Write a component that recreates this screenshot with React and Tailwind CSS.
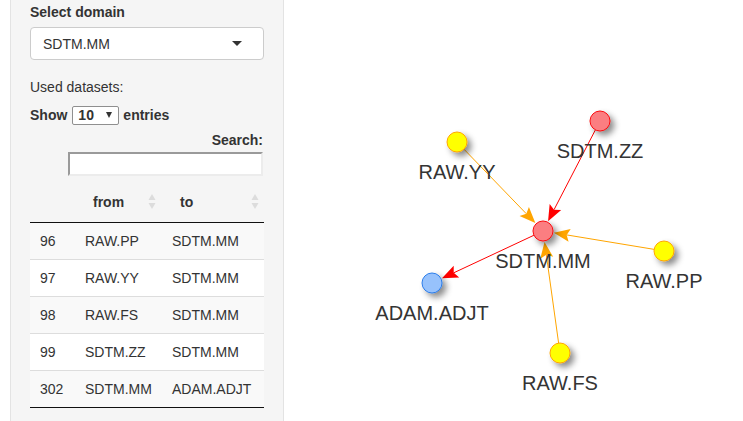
import React from 'react'

const rows = [
  { id: 96, from: 'RAW.PP', to: 'SDTM.MM' },
  { id: 97, from: 'RAW.YY', to: 'SDTM.MM' },
  { id: 98, from: 'RAW.FS', to: 'SDTM.MM' },
  { id: 99, from: 'SDTM.ZZ', to: 'SDTM.MM' },
  { id: 302, from: 'SDTM.MM', to: 'ADAM.ADJT' },
]

const palette = {
  red: { fill: '#FB7E81', stroke: '#FA0A10' },
  yellow: { fill: '#FFFF00', stroke: '#FFA500' },
  blue: { fill: '#97C2FC', stroke: '#2B7CE9' },
}

const nodes = {
  'RAW.YY': { x: 457, y: 142, c: 'yellow' },
  'SDTM.ZZ': { x: 600, y: 121, c: 'red' },
  'SDTM.MM': { x: 543, y: 231, c: 'red' },
  'RAW.PP': { x: 664, y: 251, c: 'yellow' },
  'ADAM.ADJT': { x: 432, y: 283, c: 'blue' },
  'RAW.FS': { x: 560, y: 353, c: 'yellow' },
}

const edges = [
  { from: 'RAW.YY', to: 'SDTM.MM', color: '#FFA500' },
  { from: 'SDTM.ZZ', to: 'SDTM.MM', color: '#FF0000' },
  { from: 'RAW.PP', to: 'SDTM.MM', color: '#FFA500' },
  { from: 'RAW.FS', to: 'SDTM.MM', color: '#FFA500' },
  { from: 'SDTM.MM', to: 'ADAM.ADJT', color: '#FF0000' },
]

const R = 10

function Edge({ e }) {
  const s = nodes[e.from]
  const t = nodes[e.to]
  const dx = t.x - s.x
  const dy = t.y - s.y
  const len = Math.hypot(dx, dy)
  const ux = dx / len
  const uy = dy / len
  const tipX = t.x - ux * (R + 1)
  const tipY = t.y - uy * (R + 1)
  const L = 16
  const W = 6.5
  const bx = tipX - ux * L
  const by = tipY - uy * L
  const pts = [
    [tipX, tipY],
    [bx - uy * W, by + ux * W],
    [bx + ux * 3, by + uy * 3],
    [bx + uy * W, by - ux * W],
  ]
  return (
    <g>
      <line x1={s.x + ux * R} y1={s.y + uy * R} x2={bx + ux * 3} y2={by + uy * 3} stroke={e.color} strokeWidth="1" />
      <polygon points={pts.map(p => p.join(',')).join(' ')} fill={e.color} />
    </g>
  )
}

function SortIcon() {
  return (
    <svg width="8" height="16" viewBox="0 0 8 16" className="shrink-0">
      <path d="M4 0 L7.5 6 L0.5 6 Z" fill="#dcdcdc" />
      <path d="M4 15 L7.5 9 L0.5 9 Z" fill="#dcdcdc" />
    </svg>
  )
}

export default function App() {
  return (
    <div
      className="flex w-[743px] h-[421px] overflow-hidden bg-white text-[14px] text-[#333333]"
      style={{ fontFamily: "'Liberation Sans', Arial, sans-serif" }}
    >
      {/* sidebar well */}
      <div className="ml-[10px] w-[274px] shrink-0 h-[421px] bg-[#f5f5f5] border-x border-[#e3e3e3] px-[19px] pt-[2px]">
        <label className="block font-bold leading-[20px] mb-[5px]">Select domain</label>
        <div className="h-[33px] bg-white border border-[#cccccc] rounded-[4px] flex items-center justify-between pl-[12px] pr-[21px]">
          <span className="leading-[20px]">SDTM.MM</span>
          <span className="w-0 h-0 border-l-[5px] border-r-[5px] border-t-[5px] border-l-transparent border-r-transparent border-t-[#333333]" />
        </div>

        <div className="mt-[17px] leading-[20px]">Used datasets:</div>

        <div className="mt-[8px] h-[20px] flex items-center font-bold">
          <span>Show</span>
          <div className="ml-[5px] mr-[4px] w-[47px] h-[19px] border border-[#8f8f8f] rounded-[2px] bg-white flex items-center justify-between pl-[5px] pr-[6px]">
            <span className="leading-[16px]">10</span>
            <span className="w-0 h-0 border-l-[3.5px] border-r-[3.5px] border-t-[6px] border-l-transparent border-r-transparent border-t-[#333333]" />
          </div>
          <span>entries</span>
        </div>

        <div className="mt-[5px] text-right font-bold leading-[20px] pr-px">Search:</div>
        <div className="flex justify-end mt-[2px] pr-px">
          <div className="w-[195px] h-[24px] bg-white border-2 border-t-[#9a9a9a] border-l-[#9a9a9a] border-r-[#ececec] border-b-[#ececec]" />
        </div>

        <table className="mt-[6px] w-[234px] border-separate border-spacing-0 table-fixed">
          <colgroup>
            <col className="w-[45px]" />
            <col className="w-[87px]" />
            <col className="w-[102px]" />
          </colgroup>
          <thead>
            <tr>
              <th className="h-[41px] border-b border-b-[#111111]" />
              <th className="h-[41px] pl-[18px] pr-[6px] text-left font-bold border-b border-b-[#111111]">
                <div className="flex items-center justify-between leading-[20px]">
                  <span>from</span>
                  <SortIcon />
                </div>
              </th>
              <th className="h-[41px] pl-[18px] pr-[5px] text-left font-bold border-b border-b-[#111111]">
                <div className="flex items-center justify-between leading-[20px]">
                  <span>to</span>
                  <SortIcon />
                </div>
              </th>
            </tr>
          </thead>
          <tbody>
            {rows.map((r, i) => {
              const first = i === 0
              const last = i === rows.length - 1
              const cell = `px-[10px] leading-[20px] whitespace-nowrap ${first ? 'h-[36px]' : last ? 'h-[38px] border-t border-t-[#dddddd] border-b border-b-[#111111]' : 'h-[37px] border-t border-t-[#dddddd]'}`
              return (
                <tr key={r.id} className={i % 2 === 0 ? 'bg-[#f9f9f9]' : 'bg-white'}>
                  <td className={cell}>{r.id}</td>
                  <td className={cell}>{r.from}</td>
                  <td className={cell}>{r.to}</td>
                </tr>
              )
            })}
          </tbody>
        </table>
      </div>

      {/* network canvas */}
      <div className="flex-1 h-[421px]">
        <svg width="459" height="421" viewBox="284 0 459 421">
          <defs>
            <filter id="sh" x="-100%" y="-100%" width="300%" height="300%">
              <feDropShadow dx="4" dy="4" stdDeviation="3" floodColor="#000" floodOpacity="0.45" />
            </filter>
          </defs>
          {edges.map((e, i) => <Edge key={i} e={e} />)}
          {Object.entries(nodes).map(([name, n]) => (
            <g key={name}>
              <circle cx={n.x} cy={n.y} r={R} fill={palette[n.c].fill} stroke={palette[n.c].stroke} strokeWidth="1" filter="url(#sh)" />
              <text
                x={n.x}
                y={n.y + 37}
                textAnchor="middle"
                fontSize="20"
                fill="#343434"
                fontFamily="'Liberation Sans', Arial, sans-serif"
              >
                {name}
              </text>
            </g>
          ))}
        </svg>
      </div>
    </div>
  )
}
